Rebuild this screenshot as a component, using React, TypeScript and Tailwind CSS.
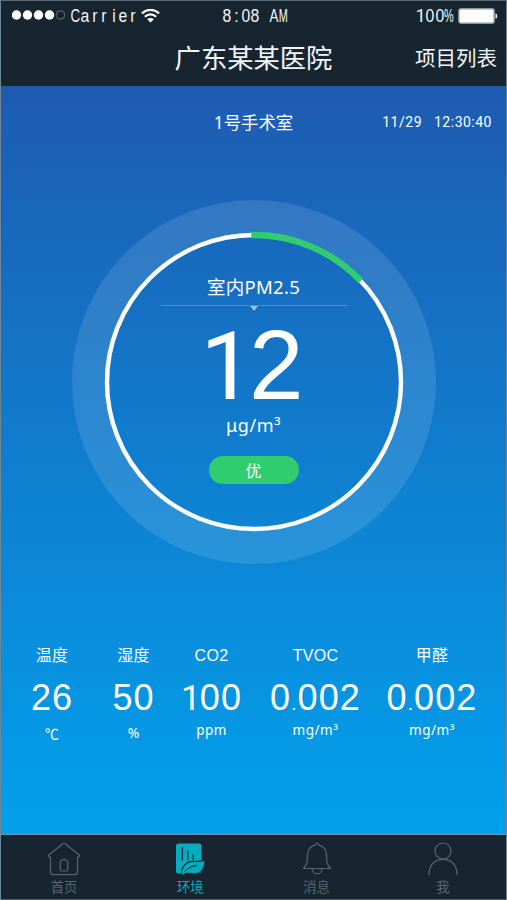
import type { ReactNode } from "react";

const cjk = "font-['Noto_Sans','Noto_Sans_CJK_SC',sans-serif]";
const hans = "font-['Noto_Sans_CJK_SC',sans-serif]";
const arial = "font-['Liberation_Sans','Noto_Sans_CJK_SC',sans-serif]";

/* Digits: "1" comes from a face without a foot serif, the point is set small. */
function Digits({ value }: { value: string }) {
  return (
    <>
      {value.split("").map((c, i) =>
        c === "1" ? (
          <span key={i} className="-mr-[0.05em] font-['Roboto',sans-serif] text-[0.97em]">{c}</span>
        ) : c === "." ? (
          <span key={i} className="text-[19px]">{c}</span>
        ) : (
          <span key={i}>{c}</span>
        )
      )}
    </>
  );
}

/* Half-width sans lettering: every character sits in a cell of equal width. */
function Cells({ text }: { text: string }) {
  return (
    <span className="flex">
      {text.split("").map((c, i) => (
        <span key={i} className="flex w-[9.5px] justify-center whitespace-pre">
          <span
            className={
              c === "M" || c === "%"
                ? "scale-x-[0.62]"
                : c === "C" || c === "A"
                  ? "scale-x-[0.76]"
                  : c === "1"
                    ? "font-['Roboto',sans-serif]"
                    : "scale-x-[0.9]"
            }
          >
            {c}
          </span>
        </span>
      ))}
    </span>
  );
}

function StatusBar() {
  return (
    <div className="grid h-[30px] grid-cols-[1fr_auto_1fr] items-center pl-[11px] pr-[8px] font-['Liberation_Sans',sans-serif] text-[17.5px] leading-[30px] text-[#f2f6fa]">
      <div className="flex items-center">
        <svg width="54" height="12" viewBox="0 0 54 12">
          {[4.5, 15.5, 26.5, 37.5].map((x) => (
            <circle key={x} cx={x} cy="5" r="4.7" fill="#fff" />
          ))}
          <circle cx="48.5" cy="5" r="4.2" fill="none" stroke="#52616d" strokeWidth="1.2" />
        </svg>
        <span className="ml-[5px]">
          <Cells text="Carrier" />
        </span>
        <svg className="ml-[3px]" width="19" height="15" viewBox="0 0 19 15" fill="none" stroke="#fff" strokeWidth="2.3">
          <path d="M.9 4.3C5.8-.2 13.2-.2 18.1 4.3" />
          <path d="M3.9 7.8c3.2-3.2 8-3.2 11.2 0" />
          <path d="M9.5 13.4 6.2 10.3c1.8-1.7 4.8-1.7 6.6 0Z" fill="#fff" stroke="none" />
        </svg>
      </div>
      <Cells text="8:08 AM" />
      <div className="flex items-center justify-end">
        <Cells text="100%" />
        <svg className="ml-[4px]" width="40" height="16" viewBox="0 0 40 16">
          <rect x=".8" y=".8" width="35.4" height="14.4" rx="2" fill="#fff" stroke="#8b959e" strokeWidth="1.4" />
          <path d="M37.5 5.2c2.3.8 2.3 4.8 0 5.6Z" fill="#fff" />
        </svg>
      </div>
    </div>
  );
}

function Gauge() {
  return (
    <div className="grid h-[364px] w-[364px] place-items-center">
      <svg className="col-start-1 row-start-1" width="364" height="364" viewBox="0 0 364 364" fill="none">
        <circle cx="182" cy="182" r="164.5" stroke="#fff" strokeOpacity=".115" strokeWidth="35" />
        <circle cx="182" cy="182" r="147" stroke="#fff" strokeWidth="4.4" />
        <path d="M179.3 35A147 147 0 0 1 288.8 81" stroke="#2fcc70" strokeWidth="6.4" />
      </svg>
      <div className="col-start-1 row-start-1 flex flex-col items-center self-start pt-[73px] text-white">
        <div className={`${cjk} h-[28px] text-[18.5px] leading-[28px] tracking-[0.3px]`}>室内PM2.5</div>
        <svg className="mt-[3px]" width="186" height="8" viewBox="0 0 186 8">
          <path d="M0 1.5h186" stroke="#4a90d3" strokeWidth="1.2" />
          <path d="M89 2h8l-4 5Z" fill="#9bc3ea" />
        </svg>
        <div className={`${arial} mr-[3px] mt-[15px] flex h-[77px] items-baseline text-[98px] leading-[77px]`}>
          <Digits value="12" />
        </div>
        <div className="mt-[7px] h-[28px] font-['Noto_Sans',sans-serif] text-[18px] leading-[28px] tracking-[0.6px]">μg/m³</div>
        <div className={`${hans} mt-[17px] h-[28px] w-[90px] shrink-0 rounded-full bg-[#2fcc70] text-center text-[16px] leading-[28px]`}>优</div>
      </div>
    </div>
  );
}

const metrics = [
  { label: "温度", value: "26", unit: "℃" },
  { label: "湿度", value: "50", unit: "%" },
  { label: "CO2", value: "100", unit: "ppm" },
  { label: "TVOC", value: "0.002", unit: "mg/m³" },
  { label: "甲醛", value: "0.002", unit: "mg/m³" },
];

function Metrics() {
  return (
    <div className="grid grid-cols-[80px_83px_73px_135px_98px] pl-[11px] text-white">
      {metrics.map((m, i) => (
        <div key={i} className="flex flex-col items-center whitespace-nowrap">
          <div className={`${arial} h-[24px] text-[16px] leading-[24px] tracking-[0.3px]`}>{m.label}</div>
          <div className={`${arial} mt-[10px] flex h-[40px] items-baseline text-[36px] leading-[40px] tracking-[1.1px]`}>
            <Digits value={m.value} />
          </div>
          <div className={`${i < 1 ? hans : cjk} h-[20px] leading-[20px] ${i < 2 ? "mt-[5px] text-[14px]" : "mt-[2px] text-[13.5px] tracking-[0.5px]"}`}>{m.unit}</div>
        </div>
      ))}
    </div>
  );
}

function Tab({ label, active, children }: { label: string; active?: boolean; children: ReactNode }) {
  return (
    <div className={`flex flex-1 flex-col items-center pt-[7px] ${active ? "text-[#08aabd]" : "text-[#596570]"}`}>
      <svg width="34" height="34" viewBox="0 0 34 34" fill="none" stroke="currentColor" strokeWidth="1.2" strokeLinejoin="round" strokeLinecap="round">
        {children}
      </svg>
      <span className={`${hans} mt-[1px] text-[13.3px] leading-[20px]`}>{label}</span>
    </div>
  );
}

const leaf = "M9.8 32.3C8.5 25.5 13.5 20.5 20.5 20.3 25 20.3 28 20.2 31 19.5 30.5 26 28 30.7 22.5 31 18 31.2 13.5 29 9.8 32.3Z";

export default function App() {
  return (
    <div className="flex h-[900px] w-[507px] flex-col overflow-hidden border-x border-t border-x-[#6d8798] border-t-[#5a6873] bg-[#172530]">
      <header className="h-[85px] shrink-0 text-[#f2f6fa]">
        <StatusBar />
        <div className={`${hans} grid h-[52px] grid-cols-[1fr_auto_1fr] items-center px-[9px]`}>
          <span />
          <h1 className="text-[26.3px] leading-[52px]">广东某某医院</h1>
          <span className="text-right text-[20.5px]">项目列表</span>
        </div>
      </header>
      <main className="flex h-[748px] shrink-0 flex-col items-center bg-[linear-gradient(to_bottom,#1e5bb1,#02a1ec)]">
        <div className="grid h-[72px] w-full grid-cols-[1fr_auto_1fr] items-center pr-[14px] text-white">
          <span />
          <span className={`${cjk} ml-[14px] text-[17.4px]`}>1号手术室</span>
          <span className="flex justify-end gap-[12px] font-['Roboto',sans-serif] text-[14px] tracking-[0.5px]">
            <span>11/29</span>
            <span>12:30:40</span>
          </span>
        </div>
        <div className="mt-[42px]">
          <Gauge />
        </div>
        <div className="mt-[80px] w-full">
          <Metrics />
        </div>
      </main>
      <footer className="flex h-[66px] shrink-0 border-y border-t-[#6f96a8] border-b-[#52606b]">
        <Tab label="首页">
          <path d="M3.5 15.2a1.5 1.5 0 0 1-1.8-2.2L15.8 1.7a2 2 0 0 1 2.4 0L32.3 13a1.5 1.5 0 0 1-1.8 2.2V30a2.7 2.7 0 0 1-2.7 2.7H6.2A2.7 2.7 0 0 1 3.5 30Z" />
          <path d="M13.2 28V21.2a3.8 3.8 0 0 1 7.6 0V28a1 1 0 0 1-1 1h-5.6a1 1 0 0 1-1-1Z" />
        </Tab>
        <Tab label="环境" active>
          <rect x="3" y="1.5" width="25.5" height="30" rx="2.5" fill="currentColor" stroke="none" />
          <path d="M9.4 5.5v12.5M14.8 9.3v8.8M20.2 13v4.5" stroke="#15303d" strokeWidth="1.3" />
          <path d={leaf} fill="#172530" stroke="#172530" strokeWidth="3" />
          <path d={leaf} fill="currentColor" strokeWidth=".8" />
          <path d="M11.5 29.6c3-3.3 6.5-5.3 12-6.1" stroke="#172530" strokeWidth="1" />
        </Tab>
        <Tab label="消息">
          <path d="M17 1.2c1 0 1.5.7 1.7 1.9 5 1.1 7.8 4.8 7.8 10.2 0 7 .4 9.2 4 13.2H3.5c3.6-4 4-6.2 4-13.2 0-5.4 2.8-9.1 7.8-10.2.2-1.2.7-1.9 1.7-1.9Z" />
          <path d="M12.3 26.8c0 6.8 9.7 6.8 9.7 0" />
        </Tab>
        <Tab label="我">
          <circle cx="17" cy="9" r="8" />
          <path d="M3 32.3c.3-10.2 6.3-15 14-15s13.7 4.8 14 15" />
        </Tab>
      </footer>
    </div>
  );
}
